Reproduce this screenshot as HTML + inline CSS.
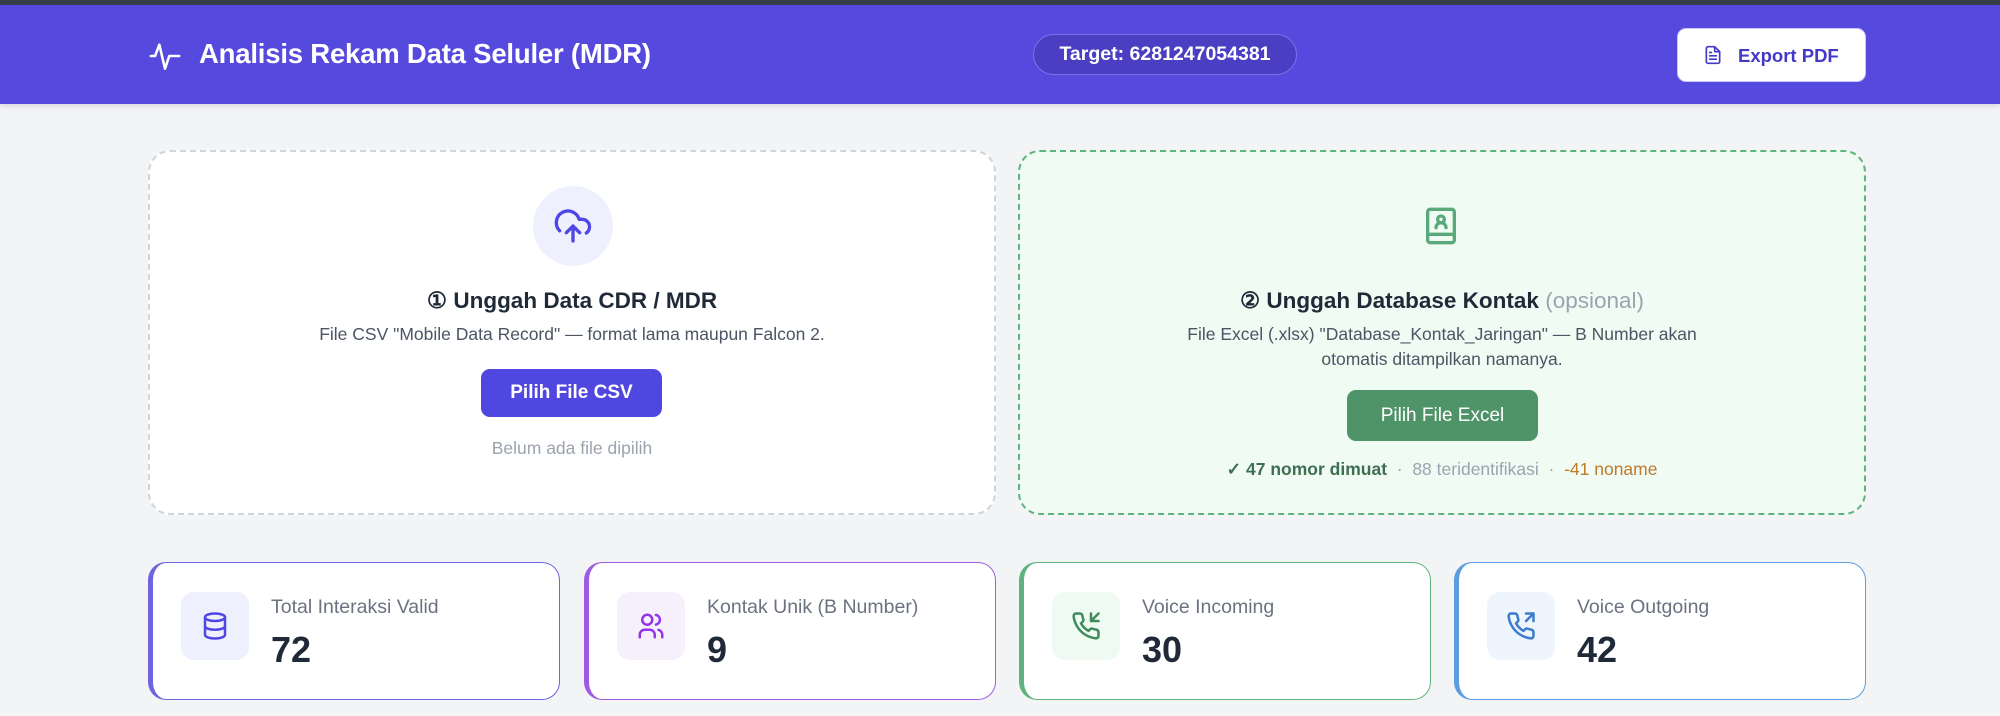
<!DOCTYPE html>
<html><head><meta charset="utf-8"><style>
*{box-sizing:border-box;margin:0;padding:0}
body{width:2000px;height:716px;overflow:hidden;background:#f3f4f6;font-family:"Liberation Sans",sans-serif;position:relative}
.top{position:absolute;left:0;top:0;width:2000px;height:5px;background:#343e46}
.hdr{position:absolute;left:0;top:5px;width:2000px;height:99px;background:#564ade;box-shadow:0 2px 6px rgba(0,0,0,.12)}
.abs{position:absolute}
.title{left:199px;top:38px;color:#fff;font-size:27.5px;font-weight:bold;letter-spacing:-0.2px}
.pill{left:1033px;top:34px;width:264px;height:41px;border-radius:21px;background:#4a3fc2;border:1px solid #7a70ea;color:#fff;font-size:19.5px;font-weight:bold;text-align:center;line-height:39px}
.exp{left:1677px;top:28px;width:189px;height:54px;border-radius:9px;background:#fff;color:#4338ca;font-size:18.5px;font-weight:bold;line-height:54px;padding-left:60px;border:1px solid #c9c5f5}
.card{position:absolute;top:150px;width:848px;height:365px;border-radius:22px;text-align:center}
.c1{left:148px;background:#fff;border:2px dashed #d1d5db}
.c2{left:1018px;background:#f0fbf4;border:2px dashed #5fb37d}
.h{position:absolute;left:0;width:100%;top:136px;font-size:22.5px;font-weight:bold;color:#1f2937}
.d{position:absolute;left:0;width:100%;font-size:17.5px;color:#4b5563;line-height:25px}
.btn{position:absolute;color:#fff;font-size:19px;font-weight:bold;border-radius:9px}
.stat{position:absolute;top:562px;width:412px;height:138px;background:#fff;border-radius:18px;border:1.5px solid;border-left-width:5px}
.ib{position:absolute;left:28px;top:29px;width:68px;height:68px;border-radius:13px}
.lb{position:absolute;left:118px;top:33px;font-size:19.5px;color:#6b7280}
.num{position:absolute;left:118px;top:66px;font-size:36px;font-weight:bold;color:#1f2937}
</style></head><body>
<div class="top"></div>
<div class="hdr"></div>
<svg class="abs" style="left:148px;top:38px" width="34" height="36" viewBox="0 0 24 24" fill="none" stroke="#fff" stroke-width="1.8" stroke-linecap="round" stroke-linejoin="round"><path d="M2 12h3l3-8 4 17 3-9h7"/></svg>
<div class="abs title">Analisis Rekam Data Seluler (MDR)</div>
<div class="abs pill">Target: 6281247054381</div>
<div class="abs exp">Export PDF</div>
<svg class="abs" style="left:1703px;top:44px" width="20" height="22" viewBox="0 0 24 24" fill="none" stroke="#4338ca" stroke-width="2" stroke-linecap="round" stroke-linejoin="round"><path d="M14 2H6a2 2 0 0 0-2 2v16a2 2 0 0 0 2 2h12a2 2 0 0 0 2-2V8z"/><path d="M14 2v6h6M8 13h8M8 17h8M8 9h2"/></svg>

<div class="card c1">
  <div style="position:absolute;left:383px;top:34px;width:80px;height:80px;border-radius:50%;background:#eef0fd"></div>
  <svg style="position:absolute;left:403px;top:54px" width="40" height="40" viewBox="0 0 24 24" fill="none" stroke="#4f46e5" stroke-width="2" stroke-linecap="round" stroke-linejoin="round"><path d="M4 14.9A7 7 0 1 1 15.7 8h1.8a4.5 4.5 0 0 1 2.5 8.2"/><path d="M12 12v9M16 16l-4-4-4 4"/></svg>
  <div class="h">① Unggah Data CDR / MDR</div>
  <div class="d" style="top:170px">File CSV "Mobile Data Record" — format lama maupun Falcon 2.</div>
  <div class="btn" style="left:331px;top:217px;width:181px;height:48px;line-height:48px;background:#5046e0">Pilih File CSV</div>
  <div class="d" style="top:284px;color:#9ca3af">Belum ada file dipilih</div>
</div>
<div class="card c2">
  <svg style="position:absolute;left:401px;top:52px" width="40" height="44" viewBox="0 0 24 24" fill="none" stroke="#5aa97a" stroke-width="2" stroke-linecap="round" stroke-linejoin="round"><rect x="4" y="2" width="16" height="20" rx="1.5"/><path d="M4 17h16"/><circle cx="12" cy="8" r="2"/><path d="M9 13a3 3 0 0 1 6 0"/></svg>
  <div class="h">② Unggah Database Kontak <span style="font-weight:normal;color:#9ca3af">(opsional)</span></div>
  <div class="d" style="top:170px">File Excel (.xlsx) "Database_Kontak_Jaringan" — B Number akan<br>otomatis ditampilkan namanya.</div>
  <div class="btn" style="left:327px;top:238px;width:191px;height:51px;line-height:51px;background:#4f9368;font-weight:normal">Pilih File Excel</div>
  <div class="d" style="top:305px;font-size:17.5px"><b style="color:#3f6e50">✓ 47 nomor dimuat</b> <span style="color:#9ca3af">&nbsp;·&nbsp; 88 teridentifikasi &nbsp;·&nbsp;</span> <span style="color:#c07a2a">-41 noname</span></div>
</div>

<div class="stat" style="left:148px;border-color:#6e63e0">
  <div class="ib" style="background:#eef0fd"></div>
  <svg style="position:absolute;left:47px;top:48px" width="30" height="30" viewBox="0 0 24 24" fill="none" stroke="#4f46e5" stroke-width="2"><ellipse cx="12" cy="5" rx="8" ry="3"/><path d="M4 5v14c0 1.7 3.6 3 8 3s8-1.3 8-3V5M4 12c0 1.7 3.6 3 8 3s8-1.3 8-3"/></svg>
  <div class="lb">Total Interaksi Valid</div><div class="num">72</div>
</div>
<div class="stat" style="left:584px;border-color:#a05ce0">
  <div class="ib" style="background:#f6f0fd"></div>
  <svg style="position:absolute;left:47px;top:48px" width="30" height="30" viewBox="0 0 24 24" fill="none" stroke="#9333ea" stroke-width="2" stroke-linecap="round"><circle cx="9" cy="7" r="4"/><path d="M3 21v-2a4 4 0 0 1 4-4h4a4 4 0 0 1 4 4v2M16 3.1a4 4 0 0 1 0 7.8M21 21v-2a4 4 0 0 0-3-3.9"/></svg>
  <div class="lb">Kontak Unik (B Number)</div><div class="num">9</div>
</div>
<div class="stat" style="left:1019px;border-color:#5fb37d">
  <div class="ib" style="background:#eefaf2"></div>
  <svg style="position:absolute;left:47px;top:48px" width="30" height="30" viewBox="0 0 24 24" fill="none" stroke="#3f8a5c" stroke-width="2" stroke-linecap="round" stroke-linejoin="round"><path d="M16 2v6h6M22 2l-6 6"/><path d="M22 16.9v3a2 2 0 0 1-2.2 2 19.8 19.8 0 0 1-8.6-3.1 19.5 19.5 0 0 1-6-6A19.8 19.8 0 0 1 2.1 4.2 2 2 0 0 1 4.1 2h3a2 2 0 0 1 2 1.7c.1 1 .4 1.9.7 2.8a2 2 0 0 1-.5 2.1L8 9.9a16 16 0 0 0 6 6l1.3-1.3a2 2 0 0 1 2.1-.4c.9.3 1.8.6 2.8.7a2 2 0 0 1 1.7 2z"/></svg>
  <div class="lb">Voice Incoming</div><div class="num">30</div>
</div>
<div class="stat" style="left:1454px;border-color:#5b9de0">
  <div class="ib" style="background:#eef5fd"></div>
  <svg style="position:absolute;left:47px;top:48px" width="30" height="30" viewBox="0 0 24 24" fill="none" stroke="#3b7bd0" stroke-width="2" stroke-linecap="round" stroke-linejoin="round"><path d="M16 2h6v6M22 2l-6 6"/><path d="M22 16.9v3a2 2 0 0 1-2.2 2 19.8 19.8 0 0 1-8.6-3.1 19.5 19.5 0 0 1-6-6A19.8 19.8 0 0 1 2.1 4.2 2 2 0 0 1 4.1 2h3a2 2 0 0 1 2 1.7c.1 1 .4 1.9.7 2.8a2 2 0 0 1-.5 2.1L8 9.9a16 16 0 0 0 6 6l1.3-1.3a2 2 0 0 1 2.1-.4c.9.3 1.8.6 2.8.7a2 2 0 0 1 1.7 2z"/></svg>
  <div class="lb">Voice Outgoing</div><div class="num">42</div>
</div>
</body></html>
